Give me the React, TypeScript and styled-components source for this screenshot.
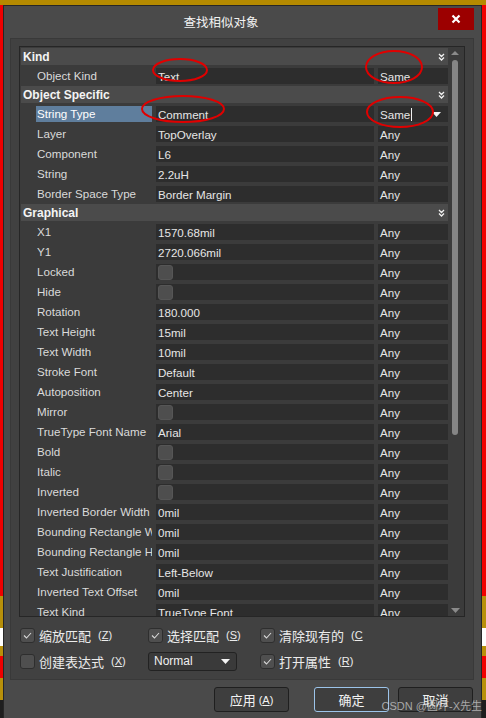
import React from "react";
import styled, { createGlobalStyle } from "styled-components";

type Row =
  | { kind: "header"; label: string }
  | {
      kind: "row";
      label: string;
      value?: string;
      check?: boolean;
      match: string;
      selected?: boolean;
      drop?: boolean;
    };

const rows: Row[] = [
  { kind: "header", label: "Kind" },
  { kind: "row", label: "Object Kind", value: "Text", match: "Same" },
  { kind: "header", label: "Object Specific" },
  { kind: "row", label: "String Type", value: "Comment", match: "Same", selected: true, drop: true },
  { kind: "row", label: "Layer", value: "TopOverlay", match: "Any" },
  { kind: "row", label: "Component", value: "L6", match: "Any" },
  { kind: "row", label: "String", value: "2.2uH", match: "Any" },
  { kind: "row", label: "Border Space Type", value: "Border Margin", match: "Any" },
  { kind: "header", label: "Graphical" },
  { kind: "row", label: "X1", value: "1570.68mil", match: "Any" },
  { kind: "row", label: "Y1", value: "2720.066mil", match: "Any" },
  { kind: "row", label: "Locked", check: true, match: "Any" },
  { kind: "row", label: "Hide", check: true, match: "Any" },
  { kind: "row", label: "Rotation", value: "180.000", match: "Any" },
  { kind: "row", label: "Text Height", value: "15mil", match: "Any" },
  { kind: "row", label: "Text Width", value: "10mil", match: "Any" },
  { kind: "row", label: "Stroke Font", value: "Default", match: "Any" },
  { kind: "row", label: "Autoposition", value: "Center", match: "Any" },
  { kind: "row", label: "Mirror", check: true, match: "Any" },
  { kind: "row", label: "TrueType Font Name", value: "Arial", match: "Any" },
  { kind: "row", label: "Bold", check: true, match: "Any" },
  { kind: "row", label: "Italic", check: true, match: "Any" },
  { kind: "row", label: "Inverted", check: true, match: "Any" },
  { kind: "row", label: "Inverted Border Width", value: "0mil", match: "Any" },
  { kind: "row", label: "Bounding Rectangle W", value: "0mil", match: "Any" },
  { kind: "row", label: "Bounding Rectangle H", value: "0mil", match: "Any" },
  { kind: "row", label: "Text Justification", value: "Left-Below", match: "Any" },
  { kind: "row", label: "Inverted Text Offset", value: "0mil", match: "Any" },
  { kind: "row", label: "Text Kind", value: "TrueType Font", match: "Any" },
];

const GlobalStyle = createGlobalStyle`
  html, body {
    margin: 0;
    padding: 0;
    background: #222;
  }
  body {
    font-family: "Liberation Sans", "Noto Sans CJK SC", sans-serif;
  }
`;

const Page = styled.div`
  position: relative;
  width: 486px;
  height: 718px;
  overflow: hidden;
  box-sizing: border-box;
  padding-top: 5px;
  background: linear-gradient(
    to bottom,
    #b58a00 0 5px,
    #f00000 5px 596px,
    #b8900a 596px 628px,
    #ffffff 628px 646px,
    #b8900a 646px 656px,
    #f00000 656px 678px,
    #b8900a 678px 700px,
    #1e1e1e 700px
  );
`;

const Dialog = styled.div`
  margin-left: 3px;
  width: 479px;
  height: 740px;
  box-sizing: border-box;
  background: #4a4a4a;
  border: 1px solid #262626;
`;

const TitleBar = styled.div`
  display: flex;
  align-items: flex-start;
  height: 32px;
`;

const Title = styled.div`
  flex: 1;
  text-align: center;
  line-height: 32px;
  font-size: 12.5px;
  color: #f2f2f2;
  font-family: "Noto Sans CJK SC", sans-serif;
`;

const CloseButton = styled.div`
  width: 36px;
  height: 22px;
  margin: 2px 7px 0 0;
  background: #9c0000;
  display: flex;
  align-items: center;
  justify-content: center;
`;

const Panel = styled.div`
  margin: 0 7px 0 6px;
  height: 642px;
  box-sizing: border-box;
  background: #414141;
  border: 1px solid #393939;
  padding: 7px 8px 0 8px;
`;

const Grid = styled.div`
  display: flex;
  height: 571px;
  box-sizing: border-box;
  border: 1px solid #262626;
  background: #3b3b3b;
`;

const RowsPane = styled.div`
  width: 428px;
  padding-top: 1px;
  overflow: hidden;
`;

const HeaderRow = styled.div`
  display: flex;
  align-items: center;
  justify-content: space-between;
  height: 17px;
  margin: 0 0 1px 1px;
  padding: 0 3px 0 2px;
  background: #4b4b4b;
  color: #f4f4f4;
  font-weight: bold;
  font-size: 12px;
`;

const DataRow = styled.div`
  display: flex;
  align-items: center;
  height: 20px;
  gap: 4px;
  font-size: 11.6px;
`;

const Label = styled.div<{ $selected?: boolean }>`
  margin-left: 16px;
  width: 115px;
  height: 16px;
  line-height: 16px;
  padding-left: 1px;
  white-space: nowrap;
  overflow: hidden;
  color: ${(p) => (p.$selected ? "#ffffff" : "#dadada")};
  background: ${(p) => (p.$selected ? "#5f7e9d" : "transparent")};
`;

const Cell = styled.div<{ $width: number }>`
  display: flex;
  align-items: center;
  justify-content: space-between;
  width: ${(p) => p.$width}px;
  height: 16px;
  box-sizing: border-box;
  padding: 0 7px 0 2px;
  background: #2d2d2d;
  color: #e6e6e6;
  white-space: nowrap;
  overflow: hidden;
`;

const CheckCell = styled.div`
  width: 15px;
  height: 15px;
  box-sizing: border-box;
  border-radius: 3px;
  background: #4e4e4e;
  border: 1px solid #565656;
`;

const Caret = styled.span`
  display: inline-block;
  width: 1px;
  height: 13px;
  margin-left: 1px;
  vertical-align: -2px;
  background: #f0f0f0;
`;

const ScrollTrack = styled.div`
  flex: 1;
  display: flex;
  flex-direction: column;
  align-items: center;
  padding-right: 2px;
`;

const ScrollArrow = styled.div`
  height: 12px;
  display: flex;
  align-items: center;
  justify-content: center;
`;

const Thumb = styled.div`
  width: 6px;
  height: 375px;
  margin-top: 1px;
  border-radius: 3px;
  background: #858585;
`;

const Spacer = styled.div`
  flex: 1;
`;

const Options = styled.div`
  display: grid;
  grid-template-columns: 128px 112px 1fr;
  grid-auto-rows: 20px;
  row-gap: 6px;
  margin-top: 8px;
  padding-left: 1px;
`;

const Option = styled.div`
  display: flex;
  align-items: center;
  gap: 4px;
  color: #ececec;
  font-size: 13px;
  font-family: "Noto Sans CJK SC", sans-serif;
  white-space: nowrap;
`;

const Box = styled.div`
  width: 15px;
  height: 15px;
  box-sizing: border-box;
  border-radius: 3px;
  background: #4f4f4f;
  border: 1px solid #2e2e2e;
  display: flex;
  align-items: center;
  justify-content: center;
`;

const Shortcut = styled.span`
  font-size: 11px;
  margin-left: 3px;
  font-family: "Liberation Sans", sans-serif;
  u {
    text-decoration: underline;
  }
`;

const Select = styled.div`
  width: 89px;
  height: 19px;
  box-sizing: border-box;
  border: 1px solid #222;
  border-radius: 3px;
  background: #3a3a3a;
  display: flex;
  align-items: center;
  justify-content: space-between;
  padding: 0 6px 0 5px;
  color: #f0f0f0;
  font-size: 12px;
  font-family: "Liberation Sans", sans-serif;
`;

const ButtonBar = styled.div`
  display: flex;
  justify-content: flex-end;
  gap: 9px;
  padding: 7px 8px 0 0;
`;

const Button = styled.div<{ $focus?: boolean; $extra?: number }>`
  width: 75px;
  height: 25px;
  box-sizing: border-box;
  border-radius: 3px;
  border: 1px solid ${(p) => (p.$focus ? "#9cc4ea" : "#1f1f1f")};
  background: #3e3e3e;
  margin-right: ${(p) => p.$extra ?? 0}px;
  display: flex;
  align-items: center;
  justify-content: center;
  color: #f2f2f2;
  font-size: 13px;
  font-family: "Noto Sans CJK SC", sans-serif;
`;

const Marks = styled.svg`
  position: absolute;
  left: 0;
  top: 0;
  pointer-events: none;
`;

const Watermark = styled.div`
  position: absolute;
  right: 4px;
  top: 697px;
  font-size: 11px;
  color: rgba(205, 205, 205, 0.75);
  font-family: "Liberation Sans", "Noto Sans CJK SC", sans-serif;
`;

const Chevrons = () => (
  <svg width="7" height="8" viewBox="0 0 7 8">
    <path d="M1 1 L3.5 3.5 L6 1 M1 4.5 L3.5 7 L6 4.5" stroke="#f0f0f0" strokeWidth="1.3" fill="none" />
  </svg>
);

const DownTri = ({ color = "#f4f4f4" }: { color?: string }) => (
  <svg width="9" height="5" viewBox="0 0 9 5">
    <path d="M0 0 H9 L4.5 5 Z" fill={color} />
  </svg>
);

const Tick = () => (
  <svg width="9" height="7" viewBox="0 0 9 7">
    <path d="M1 3.5 L3.5 6 L8 1" stroke="#d8d8d8" strokeWidth="1.1" fill="none" />
  </svg>
);

const App = () => {
  return (
    <>
      <GlobalStyle />
      <Page>
        <Dialog>
          <TitleBar>
            <Title>查找相似对象</Title>
            <CloseButton>
              <svg width="10" height="10" viewBox="0 0 10 10">
                <path d="M1.5 1.5 L8.5 8.5 M8.5 1.5 L1.5 8.5" stroke="#fff" strokeWidth="2.2" />
              </svg>
            </CloseButton>
          </TitleBar>
          <Panel>
            <Grid>
              <RowsPane>
                {rows.map((r, i) =>
                  r.kind === "header" ? (
                    <HeaderRow key={i}>
                      <span>{r.label}</span>
                      <Chevrons />
                    </HeaderRow>
                  ) : (
                    <DataRow key={i}>
                      <Label $selected={r.selected}>{r.label}</Label>
                      <Cell $width={218}>
                        {r.check ? <CheckCell /> : <span>{r.value}</span>}
                      </Cell>
                      <Cell $width={70}>
                        <span>
                          {r.match}
                          {r.drop && <Caret />}
                        </span>
                        {r.drop && <DownTri />}
                      </Cell>
                    </DataRow>
                  )
                )}
              </RowsPane>
              <ScrollTrack>
                <ScrollArrow>
                  <svg width="8" height="4" viewBox="0 0 8 4">
                    <path d="M0 4 H8 L4 0 Z" fill="#8a8a8a" />
                  </svg>
                </ScrollArrow>
                <Thumb />
                <Spacer />
                <ScrollArrow>
                  <DownTri color="#8a8a8a" />
                </ScrollArrow>
              </ScrollTrack>
            </Grid>
            <Options>
              <Option>
                <Box>
                  <Tick />
                </Box>
                缩放匹配
                <Shortcut>
                  (<u>Z</u>)
                </Shortcut>
              </Option>
              <Option>
                <Box>
                  <Tick />
                </Box>
                选择匹配
                <Shortcut>
                  (<u>S</u>)
                </Shortcut>
              </Option>
              <Option>
                <Box>
                  <Tick />
                </Box>
                清除现有的
                <Shortcut>
                  (<u>C</u>
                </Shortcut>
              </Option>
              <Option>
                <Box />
                创建表达式
                <Shortcut>
                  (<u>X</u>)
                </Shortcut>
              </Option>
              <Option>
                <Select>
                  <span>Normal</span>
                  <DownTri />
                </Select>
              </Option>
              <Option>
                <Box>
                  <Tick />
                </Box>
                打开属性
                <Shortcut>
                  (<u>R</u>)
                </Shortcut>
              </Option>
            </Options>
          </Panel>
          <ButtonBar>
            <Button $extra={16}>
              应用
              <Shortcut>
                (<u>A</u>)
              </Shortcut>
            </Button>
            <Button $focus>确定</Button>
            <Button>取消</Button>
          </ButtonBar>
        </Dialog>
        <Marks width="486" height="718">
          <g fill="none" stroke="#e00000" strokeWidth="2">
            <ellipse cx="180" cy="70" rx="27" ry="11" />
            <ellipse cx="183" cy="109" rx="41" ry="13" />
            <ellipse cx="394" cy="67" rx="28" ry="16" />
            <ellipse cx="400" cy="112" rx="33" ry="15" />
          </g>
        </Marks>
        <Watermark>CSDN @圆环-X先生</Watermark>
      </Page>
    </>
  );
};

export default App;
